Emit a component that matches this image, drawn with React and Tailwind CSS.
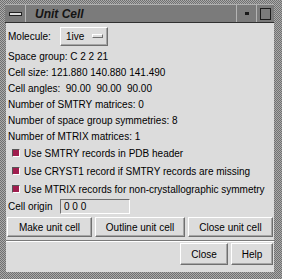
import React from 'react'

// Motif-style "Unit Cell" dialog
const ROWS = [
  'Space group: C 2 2 21',
  'Cell size: 121.880 140.880 141.490',
  'Cell angles:  90.00  90.00  90.00',
  'Number of SMTRY matrices: 0',
  'Number of space group symmetries: 8',
  'Number of MTRIX matrices: 1',
]

const TOGGLES = [
  'Use SMTRY records in PDB header',
  'Use CRYST1 record if SMTRY records are missing',
  'Use MTRIX records for non-crystallographic symmetry',
]

const raised = 'border border-t-white border-l-white border-b-[#6f6f6f] border-r-[#6f6f6f] shadow-[inset_-1px_-1px_0_#a6a6a6]'
const sunken = 'border border-t-[#6f6f6f] border-l-[#6f6f6f] border-b-white border-r-white'

function Button({ children, className = '' }) {
  return (
    <button className={`${raised} bg-[#dcdcdc] flex items-center justify-center text-black ${className}`}>
      {children}
    </button>
  )
}

export default function App() {
  return (
    <div className="w-[282px] h-[279px] bg-[repeating-conic-gradient(#aaaaaa_0%_25%,#707070_0%_50%)] bg-[length:2px_2px] pt-[4px] pl-[5px] pr-[8px] pb-[7px] flex flex-col font-['Liberation_Sans',Arial,sans-serif] text-[10px] text-black">
      {/* title bar */}
      <div className="h-[19px] flex bg-[#7b7b7b] border-t border-t-[#b0b0b0] border-b border-b-[#303030]">
        <div className="w-[21px] flex items-center justify-center border-r border-r-[#b4b4b4]">
          <div className="w-[13px] h-[4px] bg-[#dcdcdc] border border-[#202020]" />
        </div>
        <div className="flex-1 flex items-center pl-[9px] text-[12px] font-bold italic text-[#141414]">Unit Cell</div>
        <div className="w-[20px] flex items-center justify-center border-l border-l-[#b4b4b4]">
          <div className="w-[4px] h-[3px] bg-[#1a1a1a]" />
        </div>
        <div className="w-[18px] flex items-center justify-center border-l border-l-[#b4b4b4]">
          <div className="w-[11px] h-[12px] border-[1.5px] border-[#1a1a1a]" />
        </div>
      </div>

      {/* dialog body */}
      <div className="flex-1 bg-[#dcdcdc] ml-[1px] flex flex-col">
        <div className="flex items-center h-[20px] mt-[3px] pl-[2px]">
          <span className="w-[52px]">Molecule:</span>
          <div className={`${raised} w-[48px] h-[19px] flex items-center justify-between pl-[5px] pr-[4px]`}>
            <span>1ive</span>
            <div className="w-[11px] h-[4px] border border-t-white border-l-white border-b-[#6f6f6f] border-r-[#6f6f6f]" />
          </div>
        </div>

        <div className="mt-[2px] pl-[2px]">
          {ROWS.map(r => (
            <div key={r} className="h-[16px] flex items-center whitespace-pre">{r}</div>
          ))}
        </div>

        <div className="pl-[6px]">
          {TOGGLES.map(t => (
            <div key={t} className="h-[18px] flex items-center gap-[4px]">
              <div className="w-[8px] h-[8px] bg-[#a01e4e] border border-t-[#555555] border-l-[#555555] border-b-white border-r-white" />
              <span>{t}</span>
            </div>
          ))}
        </div>

        <div className="h-[17px] flex items-center pl-[2px]">
          <span className="w-[52px]">Cell origin</span>
          <div className={`${sunken} w-[70px] h-[15px] flex items-center pl-[3px]`}>0 0 0</div>
        </div>

        <div className="flex gap-[3px] mt-[2px] pl-[1px]">
          <Button className="w-[85px] h-[20px]">Make unit cell</Button>
          <Button className="w-[90px] h-[20px]">Outline unit cell</Button>
          <Button className="w-[85px] h-[20px]">Close unit cell</Button>
        </div>

        <div className="mt-[3px] border-t border-t-[#7a7a7a] border-b border-b-white" />

        <div className="flex justify-end gap-[3px] mt-[1px] pr-[1px]">
          <Button className="w-[48px] h-[22px]">Close</Button>
          <Button className="w-[42px] h-[22px]">Help</Button>
        </div>
      </div>
    </div>
  )
}
